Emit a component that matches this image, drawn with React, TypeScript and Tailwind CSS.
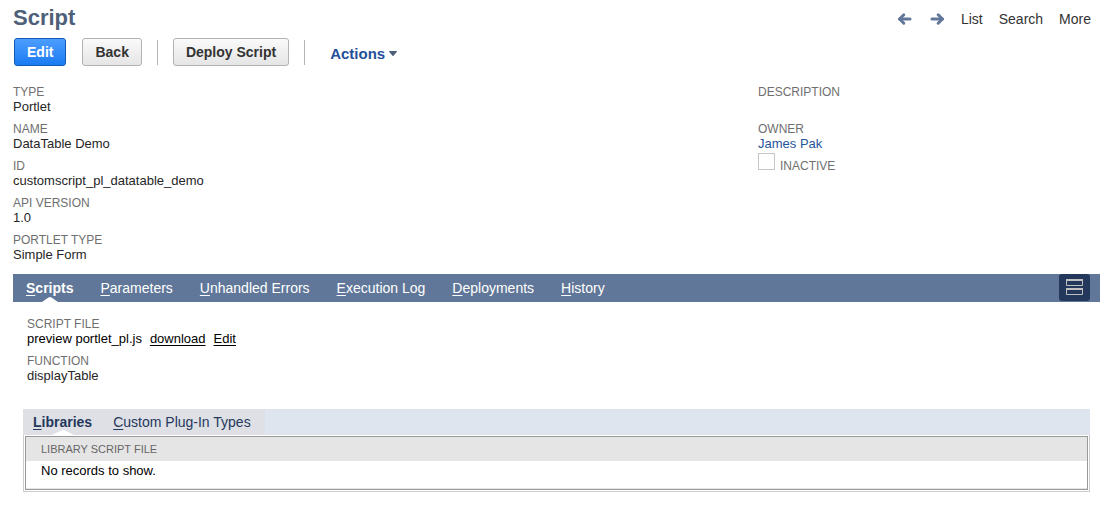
import type { ReactNode } from "react";
import clsx from "clsx";

const FIELDS = [
  { label: "Type", value: "Portlet" },
  { label: "Name", value: "DataTable Demo" },
  { label: "ID", value: "customscript_pl_datatable_demo" },
  { label: "API Version", value: "1.0" },
  { label: "Portlet Type", value: "Simple Form" },
];

const TABS = ["Scripts", "Parameters", "Unhandled Errors", "Execution Log", "Deployments", "History"];
const SUBTABS = ["Libraries", "Custom Plug-In Types"];

export default function App() {
  return (
    <main className="pl-[13px] pr-[9px] pt-1 pb-4 font-['Liberation_Sans',Arial,sans-serif] text-[13px] leading-[15px] text-[#262626]">
      <RecordHeader />
      <ActionBar />
      <RecordFields />
      <TabBar />
      <ScriptsPanel />
    </main>
  );
}

function RecordHeader() {
  return (
    <header className="flex items-center justify-between pr-[9px]">
      <h1 className="text-[22px] leading-[28px] font-bold text-[#4d5f79]">Script</h1>
      <nav className="flex items-center gap-4 pt-0.5 text-sm text-[#333333]">
        <a href="#previous" aria-label="Previous record">
          <ArrowIcon />
        </a>
        <a href="#next" aria-label="Next record" className="rotate-180">
          <ArrowIcon />
        </a>
        <a href="#list">List</a>
        <a href="#search">Search</a>
        <a href="#more">More</a>
      </nav>
    </header>
  );
}

function ArrowIcon() {
  return (
    <svg viewBox="0 0 16 14" className="h-[14px] w-4" fill="none" stroke="#607799" strokeWidth="3">
      <path d="M2.500 7H13" strokeLinecap="round" />
      <path d="M6.800 2.800 2.600 7l4.200 4.200" strokeLinecap="round" strokeLinejoin="round" />
    </svg>
  );
}

function ActionBar() {
  return (
    <div className="flex items-center pl-px pt-1.5">
      <BarButton primary>Edit</BarButton>
      <div className="w-4" />
      <BarButton>Back</BarButton>
      <Divider />
      <BarButton>Deploy Script</BarButton>
      <Divider />
      <button type="button" className="ml-2.5 flex items-center gap-1 pt-0.5 text-[15px] font-bold text-[#24509b]">
        Actions
        <svg viewBox="0 0 8 5" className="h-[5px] w-2" fill="#4d5f79">
          <path d="M.5 0h7q.7.4.2 1L4.500 4.700q-.5.500-1 0L.3 1Q-.2.400.5 0z" />
        </svg>
      </button>
    </div>
  );
}

function BarButton({ primary, children }: { primary?: boolean; children: ReactNode }) {
  return (
    <button
      type="button"
      className={clsx(
        "h-7 rounded-[3px] border bg-linear-to-b px-3 text-sm font-bold",
        primary
          ? "border-[#125ab2] from-[#4c9dff] to-[#187bf2] text-white"
          : "border-[#b2b2b2] from-[#fafafa] to-[#e5e5e5] text-[#333333]",
      )}
    >
      {children}
    </button>
  );
}

function Divider() {
  return <div className="mx-[15px] h-[25px] w-px bg-[#b3b3b3]" />;
}

function Field({ label, children }: { label: string; children?: ReactNode }) {
  return (
    <div className="min-h-[30px]">
      <dt className="pt-px text-xs leading-[15px] text-[#6f6f6f] uppercase">{label}</dt>
      <dd className="leading-[14px]">{children}</dd>
    </div>
  );
}

function RecordFields() {
  return (
    <div className="grid grid-cols-[745fr_342fr] pt-[18px] pb-3">
      <dl className="space-y-[7px]">
        {FIELDS.map((f) => (
          <Field key={f.label} label={f.label}>
            {f.value}
          </Field>
        ))}
      </dl>
      <div>
        <dl className="space-y-[7px]">
          <Field label="Description" />
          <Field label="Owner">
            <a href="#owner" className="text-[#255599]">
              James Pak
            </a>
          </Field>
        </dl>
        <div className="mt-0.5 flex items-start gap-[5px]">
          <input
            id="inactive"
            type="checkbox"
            className="size-[17px] appearance-none border border-[#c6c6c6] bg-white checked:bg-[#607799]"
          />
          <label htmlFor="inactive" className="pt-1.5 text-xs leading-[15px] text-[#6f6f6f] uppercase">
            Inactive
          </label>
        </div>
      </div>
    </div>
  );
}

function TabLabel({ text }: { text: string }) {
  return (
    <>
      <span className="underline underline-offset-2">{text[0]}</span>
      {text.slice(1)}
    </>
  );
}

function TabBar() {
  return (
    <div className="flex h-7 items-start justify-between bg-[#607799] pr-2.5">
      <nav className="flex gap-[27px] pl-[13px] text-sm leading-[28px] text-white">
        {TABS.map((tab, i) => (
          <a key={tab} href={"#" + tab} className={clsx("relative whitespace-nowrap", i === 0 && "font-bold")}>
            <TabLabel text={tab} />
            {i === 0 && <Notch className="w-4" />}
          </a>
        ))}
      </nav>
      <button
        type="button"
        aria-label="Toggle subtab layout"
        className="flex h-[27px] w-[31px] items-center justify-center rounded-[3px] bg-[#24385b]"
      >
        <svg viewBox="0 0 17 17" className="size-[17px]" fill="none" stroke="#c0c0c0">
          <path d="M.5.5h16v6H.5zM.5 9.500h16v6H.5z" />
          <path d="M0 1h17M0 10h17" strokeWidth="2" />
        </svg>
      </button>
    </div>
  );
}

function Notch({ className }: { className: string }) {
  return (
    <svg
      viewBox="0 0 16 5"
      preserveAspectRatio="none"
      className={clsx("absolute bottom-0 left-1/2 h-[5px] -translate-x-1/2", className)}
      fill="#ffffff"
    >
      <path d="M0 5 6.500.6q1.500-1 3 0L16 5z" />
    </svg>
  );
}

function ScriptsPanel() {
  return (
    <section className="pt-3.5 pr-2.5 pl-2.5">
      <dl className="space-y-[7px] pl-1">
        <Field label="Script File">
          <div className="flex gap-2 text-black">
            <span>preview portlet_pl.js</span>
            <a href="#download" className="underline underline-offset-2">
              download
            </a>
            <a href="#edit" className="underline underline-offset-2">
              Edit
            </a>
          </div>
        </Field>
        <Field label="Function">displayTable</Field>
      </dl>
      <div className="mt-[26px] bg-[#dfe5ef]">
        <nav className="flex w-fit gap-[21px] bg-[#dee0e6] pr-3.5 pl-2.5 text-sm leading-[26px] text-[#24385b]">
          {SUBTABS.map((tab, i) => (
            <a key={tab} href={"#" + tab} className={clsx("relative", i === 0 && "font-bold")}>
              <TabLabel text={tab} />
              {i === 0 && <Notch className="w-[22px]" />}
            </a>
          ))}
        </nav>
      </div>
      <div className="border border-t-0 border-[#cccccc] px-px pt-px pb-px">
        <table className="w-full border-separate border-spacing-0 border border-[#999999] text-left text-black">
          <thead>
            <tr>
              <th className="h-6 bg-[#e5e5e5] px-[15px] text-[11px] font-normal text-[#666666] uppercase">
                Library Script File
              </th>
            </tr>
          </thead>
          <tbody>
            <tr>
              <td className="h-7 border-b border-[#e5e5e5] px-[15px] pt-0.5 align-top">No records to show.</td>
            </tr>
          </tbody>
        </table>
      </div>
    </section>
  );
}
